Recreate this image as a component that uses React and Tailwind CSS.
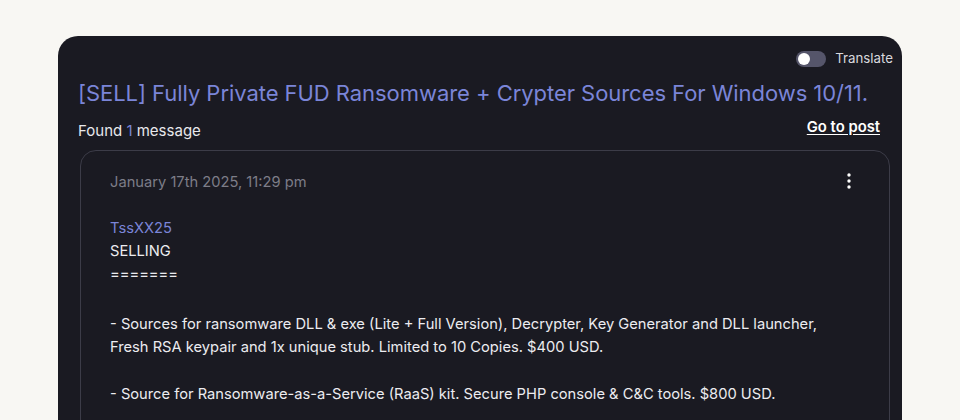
import { useState } from "react";

const App = () => {
  const [translate, setTranslate] = useState(false);

  return (
    <div className="min-h-screen bg-[#f8f7f3] pt-[36px] px-[58px] font-['Inter',sans-serif]">
      <div className="bg-[#1a1a22] rounded-t-[20px] h-[384px] pl-[20px] pr-[12px] pt-[14px] overflow-hidden">
        <div className="flex justify-end items-center gap-[9px] h-[18px] -mr-[3px]">
          <button
            onClick={() => setTranslate(!translate)}
            className="w-[30px] h-[16px] rounded-full bg-[#55556a] flex items-center px-[2px]"
          >
            <span className="w-[12px] h-[12px] rounded-full bg-white" />
          </button>
          <span className="text-[13.3px] text-[#d8d8de]">Translate</span>
        </div>
        <h1 className="text-[22px] leading-[30px] text-[#7b85d8] mt-[10px] tracking-[-0.05px]">
          [SELL] Fully Private FUD Ransomware + Crypter Sources For Windows 10/11.
        </h1>
        <div className="flex justify-between items-center mt-[6px] pr-[10px]">
          <span className="text-[15px] text-[#e8e8ec] mt-[6px]">
            Found <span className="text-[#7b85d8]">1</span> message
          </span>
          <a href="#" className="text-[14.8px] font-semibold text-white underline underline-offset-2 -mt-[2px]">
            Go to post
          </a>
        </div>
        <div className="mt-[7px] ml-[2px] border border-[#3c3c48] rounded-t-[16px] h-[300px] pl-[29px] pr-[30px] pt-[20px]">
          <div className="flex justify-between items-center">
            <span className="text-[14.7px] text-[#7d7d88]">January 17th 2025, 11:29 pm</span>
            <svg width="4" height="16" viewBox="0 0 4 16" className="mr-[8px] -mt-[2px]">
              <circle cx="2" cy="2" r="1.7" fill="#fff" />
              <circle cx="2" cy="8" r="1.7" fill="#fff" />
              <circle cx="2" cy="14" r="1.7" fill="#fff" />
            </svg>
          </div>
          <div className="mt-[24px] text-[14.7px] leading-[23.3px] text-[#ececf0]">
            <div className="text-[#7b85d8]">TssXX25</div>
            <div>SELLING</div>
            <div>=======</div>
            <div className="h-[26.3px]" />
            <div>
              - Sources for ransomware DLL &amp; exe (Lite + Full Version), Decrypter, Key Generator and DLL launcher,
              <br />
              Fresh RSA keypair and 1x unique stub. Limited to 10 Copies. $400 USD.
            </div>
            <div className="h-[23.3px]" />
            <div>- Source for Ransomware-as-a-Service (RaaS) kit. Secure PHP console &amp; C&amp;C tools. $800 USD.</div>
          </div>
        </div>
      </div>
    </div>
  );
};

export default App;
